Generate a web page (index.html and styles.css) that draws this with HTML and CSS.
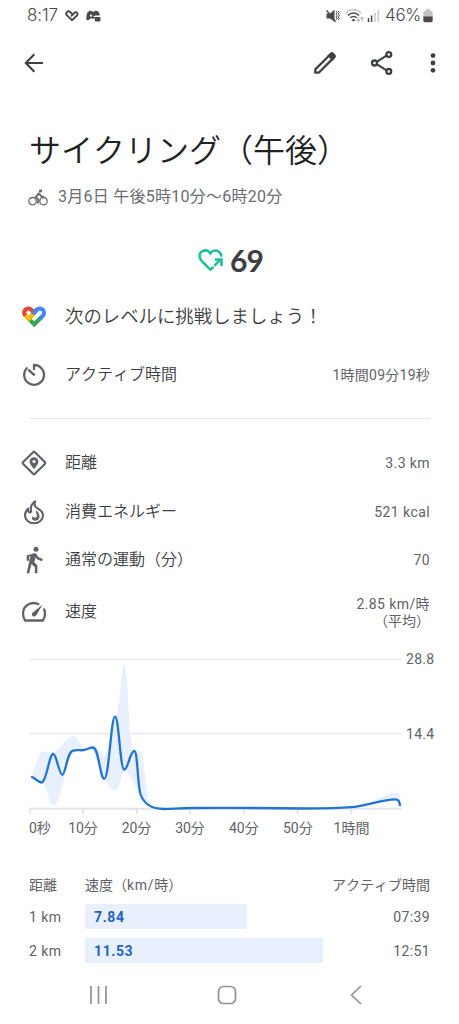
FILE: index.html
```html
<!DOCTYPE html>
<html lang="ja">
<head>
<meta charset="utf-8">
<title>サイクリング（午後）</title>
<link rel="stylesheet" href="styles.css">
</head>
<body>
<div class="screen">
  <div class="status">
    <span class="clock">8:17</span>
    <svg class="st-heart" width="14" height="12" viewBox="0 0 14 12"><path d="M7 10.200 2 5.400a2.200 2.200 0 0 1 3.200-3.400L8.300 5M6 6.300l4.200-4.200a2.100 2.100 0 0 1 2 3.200L7 10.200" fill="none" stroke="#4a4a4a" stroke-width="1.900"/></svg>
    <svg class="st-game" width="15" height="12" viewBox="0 0 15 12"><path d="M.4 9C.2 5.5 1 2 2.7 1.2L5 .5l.8.9h2.600L9.500.500l2.300.700c1.200.900 1.800 2.600 2 4.300H9v3H4.500L2.300 10.300C1 10.500.400 10 .400 9Z" fill="#4a4a4a"/><circle cx="5" cy="5.700" r="1.100" fill="#fff"/><path d="M7.500 6.500h1.800" stroke="#fff"/><rect x="8.800" y="7" width="5.600" height="4.500" rx=".8" fill="#4a4a4a"/></svg>
    <span class="spacer"></span>
    <svg width="14" height="14" viewBox="0 0 14 14"><path d="M.5 4.500H4L8.500.8v12L4 9.500H.5Z" fill="#4a4a4a"/><path d="m.6 1.400 9 11.500" stroke="#4a4a4a" stroke-width="1.500"/><path d="m10 2 1 1.500-1 1.500 1 1.500-1 1.500 1 1.500-1 1.500M12.300 2l1 1.500-1 1.500 1 1.500-1 1.500 1 1.500-1 1.500" fill="none" stroke="#4a4a4a"/></svg>
    <svg class="st-wifi" width="20" height="14" viewBox="0 0 20 14"><path d="M1 4.200a10 10 0 0 1 15 0" fill="none" stroke="#c4c4c4" stroke-width="1.500"/><path d="M3 6.500a7.500 7.500 0 0 1 11 0M5.300 8.800a4.500 4.500 0 0 1 6.400 0" fill="none" stroke="#4a4a4a" stroke-width="1.500"/><path d="m8.500 12.800-1.900-1.900a2.800 2.800 0 0 1 3.800 0Z" fill="#4a4a4a"/><path d="M13.300 8v4.500m-1.700-1.600 1.700 1.800 1.700-1.800M17 12.500V8m-1.700 1.800L17 8l1.700 1.800" fill="none" stroke="#aaa"/></svg>
    <svg class="st-signal" width="13" height="13" viewBox="0 0 13 13"><path d="M1.500 9v4M4.600 6.500V13" stroke="#4a4a4a" stroke-width="1.500"/><path d="M8 3.500V13M11.300.8V13" stroke="#c8c8c8" stroke-width="1.500"/></svg>
    <span class="percent">46%</span>
    <svg class="st-battery" width="10" height="14" viewBox="0 0 10 14"><path d="M3 0h4v1.800h1q1.700 0 1.700 1.700V8H.3V3.500Q.3 1.800 2 1.800h1Z" fill="#c4c4c4"/><path d="M.3 7.500h9.400v4q0 1.700-1.700 1.700H2Q.3 13.200.3 11.500Z" fill="#4a4a4a"/></svg>
  </div>

  <header class="appbar">
    <svg width="20" height="20" viewBox="0 0 20 20"><path d="M19 10H2M10.300 1.300 1.800 10l8.500 8.700" fill="none" stroke="#3c4043" stroke-width="2.100"/></svg>
    <span class="spacer"></span>
    <svg class="edit" width="24" height="24" viewBox="0 0 24 24"><path d="M2.300 21.700v-3.300L16.200 4.500l3.400 3.400L5.700 21.700Z" fill="none" stroke="#3c4043" stroke-width="2.300" stroke-linejoin="round"/><path d="m14.300 4.700 2.900-2.900q1.500-1.300 3-.2l2.200 2.200q1.200 1.400 0 3l-2.900 2.900Z" fill="#3c4043"/></svg>
    <svg class="share" width="24" height="26" viewBox="0 0 24 26"><path d="m7 11.700 9.500-6M7 14.300l9.500 6" stroke="#3c4043" stroke-width="2"/><g fill="#fff" stroke="#3c4043" stroke-width="2.300"><circle cx="4.500" cy="13" r="2.500"/><circle cx="18.800" cy="4.600" r="2.400"/><circle cx="18.800" cy="21.400" r="2.400"/></g></svg>
    <svg class="more" width="6" height="20" viewBox="0 0 6 20"><g fill="#3c4043"><circle cx="3" cy="2.600" r="2.400"/><circle cx="3" cy="10" r="2.400"/><circle cx="3" cy="17.300" r="2.400"/></g></svg>
  </header>

  <h1 class="title">サイクリング（午後）</h1>
  <div class="subtitle">
    <svg width="20" height="17" viewBox="0 0 20 17"><g fill="none" stroke="#6a6d71" stroke-width="1.300"><circle cx="4.500" cy="12.200" r="3.700"/><circle cx="15.500" cy="12.200" r="3.700"/></g><path d="m9.700 14.500.8-4L7.600 8l3.300-3.500 2.500 2.900 3 .8" fill="none" stroke="#6a6d71" stroke-width="1.900"/><circle cx="12.500" cy="1.900" r="1.700" fill="#6a6d71"/></svg>
    <span>3月6日 午後5時10分〜6時20分</span>
  </div>

  <div class="score">
    <svg width="26" height="24" viewBox="0 0 26 24"><path d="M15.500 19 12.300 21.600 4 13.300C.3 9.500 1 5 4.500 3.200 7.500 1.600 10.500 2.800 12.300 5.300c2-2.700 5.500-3.600 8.300-1.700 1.900 1.200 2.900 3.200 2.500 5.200" fill="none" stroke="#1bbf9c" stroke-width="2.500"/><path d="m16.200 17.800 6.300-6.200M17 11.500h6.500v6.400" fill="none" stroke="#1bbf9c" stroke-width="2.500"/></svg>
    <span>69</span>
  </div>

  <div class="row challenge">
    <svg class="icon" width="26" height="26" viewBox="0 0 26 26"><g fill="none" stroke-width="4.200"><path d="m6.500 13.500 6.800 6.800 6.800-6.800" stroke="#34a853"/><path d="m18.800 14.800 2.600-2.600c2-2 2.100-4.800.3-6.500s-4.300-1.500-6.200.3l-6 6" stroke="#4285f4"/><path d="m3.800 10.700 4 4 5-5" stroke="#fbbc04"/><path d="M4.500 11.500C2.700 9.600 2.800 7.300 4.400 5.700s4.300-1.600 6.100.2l3.100 3.100" stroke="#ea4335"/><path d="m12.300 9.800 3.300-3.800" stroke="#4285f4"/></g><path d="m13 15 6.500-6.500" stroke="#fff" stroke-width="3" stroke-linecap="round"/><circle cx="8" cy="9" r="1.600" fill="#fff"/></svg>
    <span class="label">次のレベルに挑戦しましょう！</span>
  </div>
  <div class="row active">
    <svg class="icon" width="26" height="26" viewBox="0 0 26 26"><path d="M6.500 5.500A9.900 9.900 0 1 0 13 3v5" fill="none" stroke="#5f6368" stroke-width="2.300"/><path d="m7.200 7.600 6.500 5.800" stroke="#5f6368" stroke-width="2.500"/></svg>
    <span class="label">アクティブ時間</span><span class="value tight">1時間09分19秒</span>
  </div>
  <div class="divider"></div>
  <div class="row distance">
    <svg class="icon" width="26" height="26" viewBox="0 0 26 26"><rect x="4.700" y="4.700" width="16.600" height="16.600" rx="1.300" transform="rotate(45 13 13)" fill="none" stroke="#5f6368" stroke-width="2.200"/><path d="M13 19.300C10 15.700 8.600 13.500 8.600 11.600a4.400 4.400 0 0 1 8.800 0c0 1.900-1.400 4.100-4.400 7.700Z" fill="#5f6368"/><circle cx="13" cy="11.500" r="1.600" fill="#fff"/></svg>
    <span class="label">距離</span><span class="value">3.3 km</span>
  </div>
  <div class="row energy">
    <svg class="icon" width="26" height="26" viewBox="0 0 26 26"><path d="M14.200 2.300C10.500 5 9.300 8 10 11c.5 2-1 3.200-2.300 1.800-.8-.8-.6-2-.5-3.200-2.200 2-3.200 4.100-3.200 6.600 0 4.600 4 8 9 8s9-3.400 9-8c0-4.500-5-6.400-7.200-8.200-1.600-1.500-1.600-3.300-.6-5.700Z" fill="none" stroke="#5f6368" stroke-width="2.100" stroke-linejoin="round"/><path d="M15.600 11.500c-1.200 1.500-.8 2.600 0 3.700.9 1.200.6 2.400-.4 3.100-1.200.8-2.900.2-3.200-1.200-2 2.300-.8 4.700 1.800 4.700 3.300 0 5-2.300 4.700-5-.2-2.300-1.700-3.400-2.900-5.300Z" fill="#5f6368"/></svg>
    <span class="label">消費エネルギー</span><span class="value">521 kcal</span>
  </div>
  <div class="row walk">
    <svg class="icon" width="26" height="28" viewBox="0 0 26 28"><circle cx="15" cy="3.200" r="2.500" fill="#5f6368"/><path d="M10.200 8.200 14 7l1.300 1.200-2 8 3.100 3v8h-2.500v-6l-3.400-3.200-2.300 9.200H5.600L9.500 10l-1.300.7v4H5.700V9.200Z" fill="#5f6368"/><path d="m14 8.200 2.800 4 4.500 1.900" fill="none" stroke="#5f6368" stroke-width="2.400"/></svg>
    <span class="label">通常の運動（分）</span><span class="value">70</span>
  </div>
  <div class="row speed">
    <svg class="icon" width="26" height="22" viewBox="0 0 26 22"><path d="M18 3.500C10.500-.5 2 4.500 2 12.500c0 2.700.8 4.800 2 7h18c1.300-2.200 2-4.300 2-7 0-2.100-.5-3.700-1.200-5.100" fill="none" stroke="#5f6368" stroke-width="2.300" stroke-linejoin="round"/><path d="M21.500 3.800 15.300 14.300c-.9 1.400-2.600 1.700-3.700.7-1.100-1.100-.9-2.800.4-3.800Z" fill="#5f6368"/></svg>
    <span class="label">速度</span><span class="value">2.85 km/時<br><span class="avg">（平均）</span></span>
  </div>

  <svg class="chart" width="459" height="210" viewBox="0 640 459 210">
    <g stroke="#e8eaed" stroke-width="1.300"><path d="M29 659.300H402M29 733.500H402"/></g>
    <path d="M29 808.700H401" stroke="#e4e6e9" stroke-width="2"/>
    <path d="M30 808v6M83 808v6M136.500 808v6M190 808v6M243.700 808v6M297.500 808v6M351 808v6" stroke="#dcdee1" stroke-width="1.500"/>
    <path class="band" d="M32 776.700C36 767 37 752 44 751.500C49 751.500 51 754 54 752.500C61 750 66 736 73 736C79 736 79 748 87 749C93 748 97 747 99 750L105 757L111 735L115 717L118 709C121 687 122 664.500 124.300 664.500C128 664.500 128 722 131.500 741C133 753 137 750 141 752C145 757 145 795 151 807L157 809C147 806 142 798 139 793L126 769C121 773 120 790 115 790.500C109 790 107 780 103 778L92 748L78 750C70 751 67 765 63 783C61 790 57 806 54 805.500C49 805.500 48 790 43 782Z"/>
    <path class="band" d="M352 807C372 806 382 792.500 397 792.500C401 793 401 797 400 803L395 800C380 800 372 806 352 807Z"/>
    <path class="line" d="M32 777C36 779 39 782.700 42 782.500C47 780 49 754 53.300 754C56.500 754 59 774.800 62.300 774.800C65.500 774.800 67 752 73 750.600C77 749.400 80 750.500 83 750.200C87 749.500 90 747.400 93 747.500C99 748 100 778.900 104.300 778.900C109 778.900 111 716.600 115 716.600C119 716.600 120 769.600 124.300 769.600C128 769.600 130 751 134.300 751C137.500 751 137.500 783 140.300 793.500C144 805 152 808.900 164 809C173 809 179 808 192 808C230 807.800 270 808 305 808.500C326 808.500 342 808 352 807.200C369 805.500 382 799.600 395 799.400C398.700 799.300 399 801 400 805"/>
    <g class="tick">
      <text class="level" x="406" y="664.400">28.8</text><text class="level" x="406" y="738.700">14.4</text>
      <text x="29" y="832.500">0秒</text>
      <g text-anchor="middle"><text x="83" y="832.500">10分</text><text x="136.500" y="832.500">20分</text><text x="190" y="832.500">30分</text><text x="243.800" y="832.500">40分</text><text x="297.800" y="832.500">50分</text><text x="351.500" y="832.500">1時間</text></g>
    </g>
  </svg>

  <div class="splits">
    <div class="split head"><span>距離</span><span>速度（<span class="unit">km/</span>時）</span><span class="end">アクティブ時間</span></div>
    <div class="split"><span>1 km</span><span class="bar" style="width:162px">7.84</span><span class="end">07:39</span></div>
    <div class="split"><span>2 km</span><span class="bar" style="width:238px">11.53</span><span class="end">12:51</span></div>
  </div>

  <nav class="nav">
    <svg width="20" height="20" viewBox="0 0 20 20"><path d="M2 1v18M9.500 1v18M17 1v18" stroke="#929292" stroke-width="1.700"/></svg>
    <svg class="home" width="20" height="20" viewBox="0 0 20 20"><rect x="1.500" y="1.500" width="17" height="17" rx="5" fill="none" stroke="#929292" stroke-width="1.700"/></svg>
    <svg width="12" height="20" viewBox="0 0 12 20"><path d="m11 1-9.500 9L11 19" fill="none" stroke="#929292" stroke-width="1.700"/></svg>
  </nav>
</div>
</body>
</html>
```
FILE: styles.css
```css
* { box-sizing: border-box; }
body {
  margin: 0;
  background: #fff;
  color: #3c4043;
  font-family: Roboto, "Noto Sans CJK JP", sans-serif;
  font-kerning: none;
}
svg { display: block; flex: none; }
.screen {
  width: 459px;
  height: 1024px;
  display: flex;
  flex-direction: column;
  overflow: hidden;
}
.screen > * { flex: none; }
.spacer { flex: 1; }

.status {
  height: 31px;
  padding: 0 26px 0 27px;
  display: flex;
  align-items: center;
  font: 300 17px/31px Inter, Roboto, sans-serif;
  color: #4a4a4a;
}
.clock { width: 38px; letter-spacing: -.1px; }
.st-game { margin-left: 7px; }
.st-wifi { margin-left: 5px; }
.st-signal { margin-left: 2px; }
.percent { margin-left: 5px; width: 38px; letter-spacing: -.3px; }

.appbar {
  height: 64px;
  padding: 0 23px 0 24px;
  display: flex;
  align-items: center;
}
.share { margin-left: 33px; }
.more { margin-left: 36px; }

.title {
  margin: 29px 0 0 29px;
  height: 54px;
  font-size: 32px;
  line-height: 54px;
  font-weight: 350;
  color: #202124;
  white-space: nowrap;
}
.subtitle {
  margin: 7px 0 0 28px;
  height: 24px;
  display: flex;
  align-items: center;
  gap: 10px;
  font-size: 16px;
  line-height: 24px;
  letter-spacing: .25px;
  color: #6a6d71;
}
.score {
  height: 44px;
  margin-top: 29px;
  padding-left: 2px;
  display: flex;
  justify-content: center;
  align-items: center;
  gap: 6px;
  font: 700 30px/44px Lato, sans-serif;
  letter-spacing: -1px;
}

.row {
  height: 48px;
  padding: 0 29px 0 21px;
  display: flex;
  align-items: center;
}
.label {
  margin-left: 18px;
  font-size: 16px;
  line-height: 24px;
  font-weight: 350;
  white-space: nowrap;
}
.value {
  margin-left: auto;
  text-align: right;
  font-size: 14px;
  line-height: 17px;
  letter-spacing: .4px;
  color: #5f6368;
}
.value.tight { letter-spacing: .25px; }
.avg { letter-spacing: 0; }
.challenge { margin-top: 11px; }
.challenge .label { font-size: 18.4px; }
.active { margin-top: 10px; }
.divider { height: 1px; margin: 19px 29px 0; background: #e3e5e8; }
.distance { margin-top: 20px; }
.energy { margin-top: 1px; }
.speed { height: 56px; }
.speed .value { padding-top: 1px; }

.chart { height: 210px; }
.band { fill: #e8f0fe; }
.line { fill: none; stroke: #2274d2; stroke-width: 2.3; stroke-linecap: round; stroke-linejoin: round; }
.tick text { font-size: 14px; fill: #5f6368; }
.tick .level { letter-spacing: .3px; }

.splits {
  margin-top: 18px;
  padding: 0 29px;
  font-size: 14px;
  color: #5f6368;
}
.split {
  height: 34px;
  display: grid;
  grid-template-columns: 56px 1fr auto;
  align-items: center;
  letter-spacing: .4px;
}
.split > span { padding-top: 1px; }
.split.head { letter-spacing: 0; height: 31px; }
.split.head > span { padding-top: 0; }
.unit { letter-spacing: .7px; }
.split > .bar {
  height: 25px;
  padding: 0 0 0 9px;
  border-radius: 2px;
  background: #e8f0fe;
  color: #2463c0;
  font-weight: 700;
  line-height: 26px;
  letter-spacing: .6px;
}
.nav {
  height: 54px;
  padding: 1px 97px 0 89px;
  display: flex;
  justify-content: space-between;
  align-items: center;
}
.home { margin-right: 6px; }
```
